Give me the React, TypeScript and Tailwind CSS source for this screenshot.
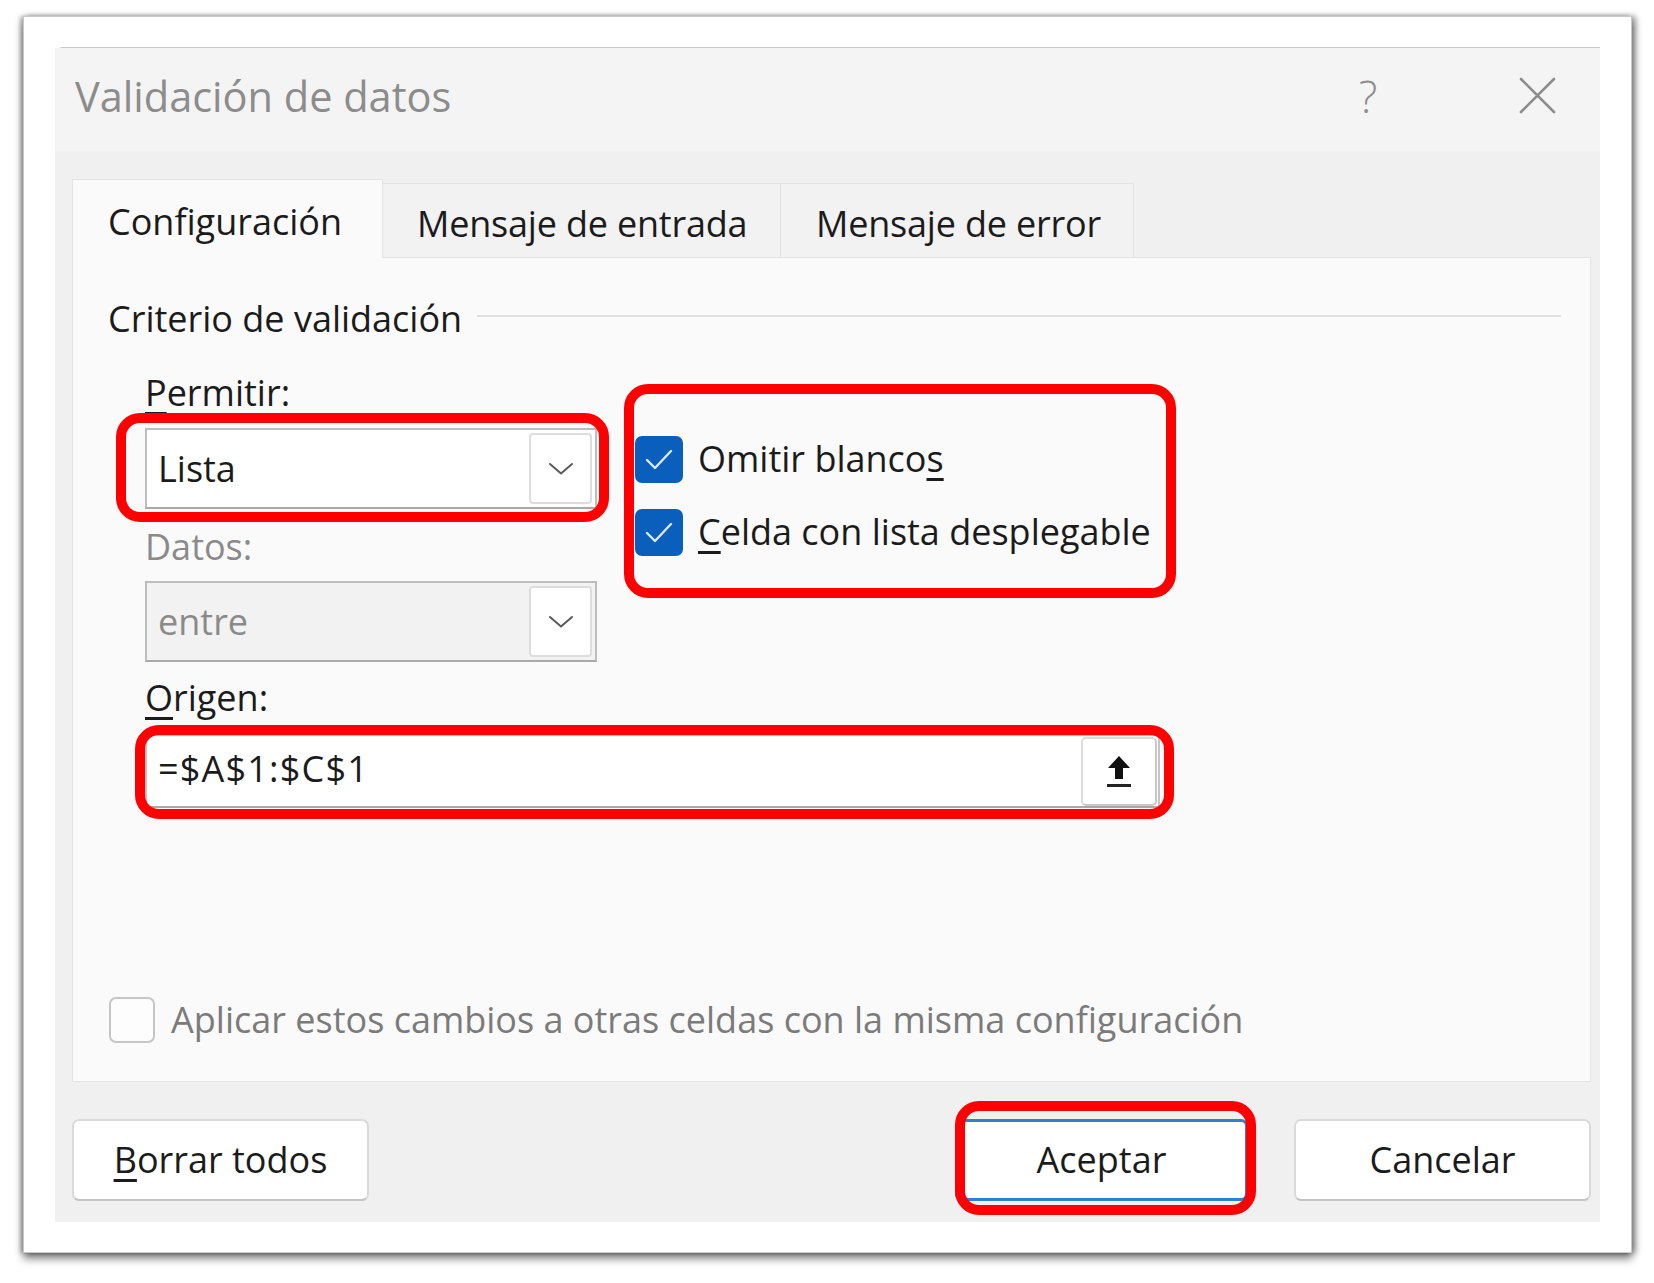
import React from 'react';

const font = "font-['Open_Sans','Noto_Sans',sans-serif]";

function Chevron() {
  return (
    <svg width="26" height="14" viewBox="0 0 26 14" fill="none">
      <path d="M2 2 L13 11.5 L24 2" stroke="#5a5a5a" strokeWidth="2" strokeLinecap="round" strokeLinejoin="round" />
    </svg>
  );
}

function Check() {
  return (
    <svg width="48" height="48" viewBox="0 0 48 48" fill="none">
      <path d="M12 25 L20 33 L36 16" stroke="#dbe7f7" strokeWidth="2.4" strokeLinecap="round" strokeLinejoin="round" />
    </svg>
  );
}

function UploadIcon() {
  return (
    <svg width="30" height="36" viewBox="0 0 30 36" fill="none">
      <path d="M15 3 L26 15 L19 15 L19 26 L11 26 L11 15 L4 15 Z" fill="#111" />
      <rect x="3" y="31" width="24" height="3" fill="#222" />
    </svg>
  );
}

function RedMark({ className }: { className: string }) {
  return <div className={`pointer-events-none absolute border-[10px] border-[#ff0000] rounded-[24px] ${className}`} />;
}

function Select({ value, disabled }: { value: string; disabled?: boolean }) {
  return (
    <div
      className={`flex h-[81px] w-[452px] items-center border-2 border-[#bdbdbd] border-b-[#a9a9a9] pl-[11px] pr-[3px] ${
        disabled ? 'bg-[#f2f2f2] text-[#8a8a8a]' : 'bg-white text-[#1b1b1b]'
      }`}
    >
      <span className="flex-1 text-[36px] leading-[48px]">{value}</span>
      <div className="flex h-[71px] w-[63px] items-center justify-center rounded-[4px] border-2 border-[#dddddd] bg-white">
        <Chevron />
      </div>
    </div>
  );
}

function CheckRow({ children }: { children: React.ReactNode }) {
  return (
    <div className="flex h-[48px] items-center gap-[15px]">
      <div className="flex h-[47px] w-[48px] items-center justify-center rounded-[7px] bg-[#0a5fbd]">
        <Check />
      </div>
      <span className="text-[36px] leading-[48px] text-[#1b1b1b]">{children}</span>
    </div>
  );
}

function Button({ children, primary }: { children: React.ReactNode; primary?: boolean }) {
  return (
    <div
      className={`flex h-[82px] items-center justify-center rounded-[7px] bg-white text-[36px] text-[#1b1b1b] ${
        primary
          ? 'w-[293px] border-[3px] border-[#2f7fd3]'
          : 'w-[297px] border-2 border-[#dadada] border-b-[#c4c4c4]'
      }`}
    >
      {children}
    </div>
  );
}

export default function App() {
  return (
    <div className={`min-h-[1283px] w-[1654px] bg-white pl-[23px] pt-[16px] ${font}`}>
      {/* paper frame */}
      <div className="h-[1237px] w-[1609px] border border-[#c9c9c9] bg-white pl-[31px] pt-[30px] shadow-[0_6px_8px_rgba(0,0,0,0.45),4px_0_6px_rgba(0,0,0,0.35),-3px_0_4px_rgba(0,0,0,0.25)]">
        {/* dialog */}
        <div className="flex h-[1175px] w-[1545px] flex-col rounded-tl-[8px] border-t border-[#c8c8c8] bg-[#f0f0f0]">
          {/* title bar */}
          <div className="flex h-[103px] items-center bg-[#f4f4f4] pb-[8px] pl-[20px] pr-[44px]">
            <span className="flex-1 text-[41.5px] leading-[52px] text-[#8c8c8c]">Validación de datos</span>
            <span className="mr-[131px] w-[40px] text-center text-[44px] font-light leading-[52px] text-[#8c8c8c]">?</span>
            <svg width="37" height="37" viewBox="0 0 37 37" fill="none">
              <path d="M2 2 L35 35 M35 2 L2 35" stroke="#8c8c8c" strokeWidth="2.6" strokeLinecap="round" />
            </svg>
          </div>

          <div className="flex flex-1 flex-col pl-[17px] pr-[9px]">
            {/* tabs */}
            <div className="mt-[28px] flex h-[78px] items-end">
              <div className="relative z-10 -mb-px flex h-[79px] w-[311px] items-center border border-b-0 border-[#e3e3e3] bg-[#fafafa] pl-[35px] pt-[6px] text-[36px] text-[#1b1b1b]">
                Configuración
              </div>
              <div className="flex h-[74px] w-[398px] items-center border border-l-0 border-b-0 border-[#e3e3e3] bg-[#f2f2f2] pl-[34px] pt-[6px] text-[36px] tracking-[-0.2px] text-[#1b1b1b]">
                Mensaje de entrada
              </div>
              <div className="flex h-[74px] w-[353px] items-center border border-l-0 border-b-0 border-[#e3e3e3] bg-[#f2f2f2] pl-[35px] pt-[6px] text-[36px] tracking-[-0.2px] text-[#1b1b1b]">
                Mensaje de error
              </div>
            </div>

            {/* panel */}
            <div className="flex h-[825px] flex-col border border-[#e3e3e3] bg-[#fafafa] pr-[29px]">
              <div className="mt-[37px] flex items-center pl-[35px]">
                <span className="text-[36px] leading-[48px] text-[#1b1b1b]">Criterio de validación</span>
                <div className="ml-[15px] mt-[-6px] h-[2px] flex-1 bg-[#e2e2e2]" />
              </div>

              <div className="mt-[26px] flex items-start pl-[72px]">
                <div className="flex w-[452px] flex-col">
                  <span className="text-[36px] leading-[48px] text-[#1b1b1b]">
                    <u className="underline-offset-[6px]">P</u>ermitir:
                  </span>
                  <div className="relative mt-[11px]">
                    <Select value="Lista" />
                    <RedMark className="left-[-29px] right-[-12px] top-[-15px] bottom-[-13px]" />
                  </div>
                  <span className="mt-[14px] text-[36px] leading-[48px] text-[#8a8a8a]">Datos:</span>
                  <div className="mt-[10px]">
                    <Select value="entre" disabled />
                  </div>
                </div>

                <div className="relative ml-[38px] flex w-[530px] flex-col gap-[25px] pt-[66px]">
                  <CheckRow>
                    Omitir blanco<u className="underline-offset-[6px]">s</u>
                  </CheckRow>
                  <CheckRow>
                    <u className="underline-offset-[6px]">C</u>elda con lista desplegable
                  </CheckRow>
                  <RedMark className="left-[-11px] right-[-11px] top-[15px] h-[214px]" />
                </div>
              </div>

              <div className="mt-[12px] flex flex-col pl-[72px]">
                <span className="text-[36px] leading-[48px] text-[#1b1b1b]">
                  <u className="underline-offset-[6px]">O</u>rigen:
                </span>
                <div className="relative mt-[12px] w-[1015px]">
                  <div className="flex h-[74px] items-center border-2 border-[#c4c4c4] border-b-[#a9a9a9] bg-white pl-[11px] pr-[1px]">
                    <span className="flex-1 pb-[4px] text-[36px] leading-[48px] tracking-[1.2px] text-[#1b1b1b]">=$A$1:$C$1</span>
                    <div className="flex h-[69px] w-[76px] items-center justify-center rounded-[5px] border-2 border-[#dcdcdc] border-b-[#c8c8c8] border-r-[#c8c8c8] bg-white">
                      <UploadIcon />
                    </div>
                  </div>
                  <RedMark className="left-[-10px] right-[-14px] top-[-9px] bottom-[-11px]" />
                </div>
              </div>

              <div className="mt-[188px] flex h-[48px] items-center gap-[16px] pl-[36px]">
                <div className="h-[46px] w-[46px] rounded-[7px] border-2 border-[#c6c6c6] bg-[#fdfdfd]" />
                <span className="text-[36px] leading-[48px] text-[#7b7b7b]">
                  Aplicar estos cambios a otras celdas con la misma configuración
                </span>
              </div>
            </div>

            {/* buttons */}
            <div className="mt-[37px] flex items-center justify-between">
              <Button>
                <span>
                  <u className="underline-offset-[6px]">B</u>orrar todos
                </span>
              </Button>
              <div className="flex items-center gap-[46px]">
                <div className="relative">
                  <Button primary>Aceptar</Button>
                  <RedMark className="left-0 right-[-8px] top-[-18px] bottom-[-14px]" />
                </div>
                <Button>Cancelar</Button>
              </div>
            </div>
          </div>
        </div>
      </div>
    </div>
  );
}
